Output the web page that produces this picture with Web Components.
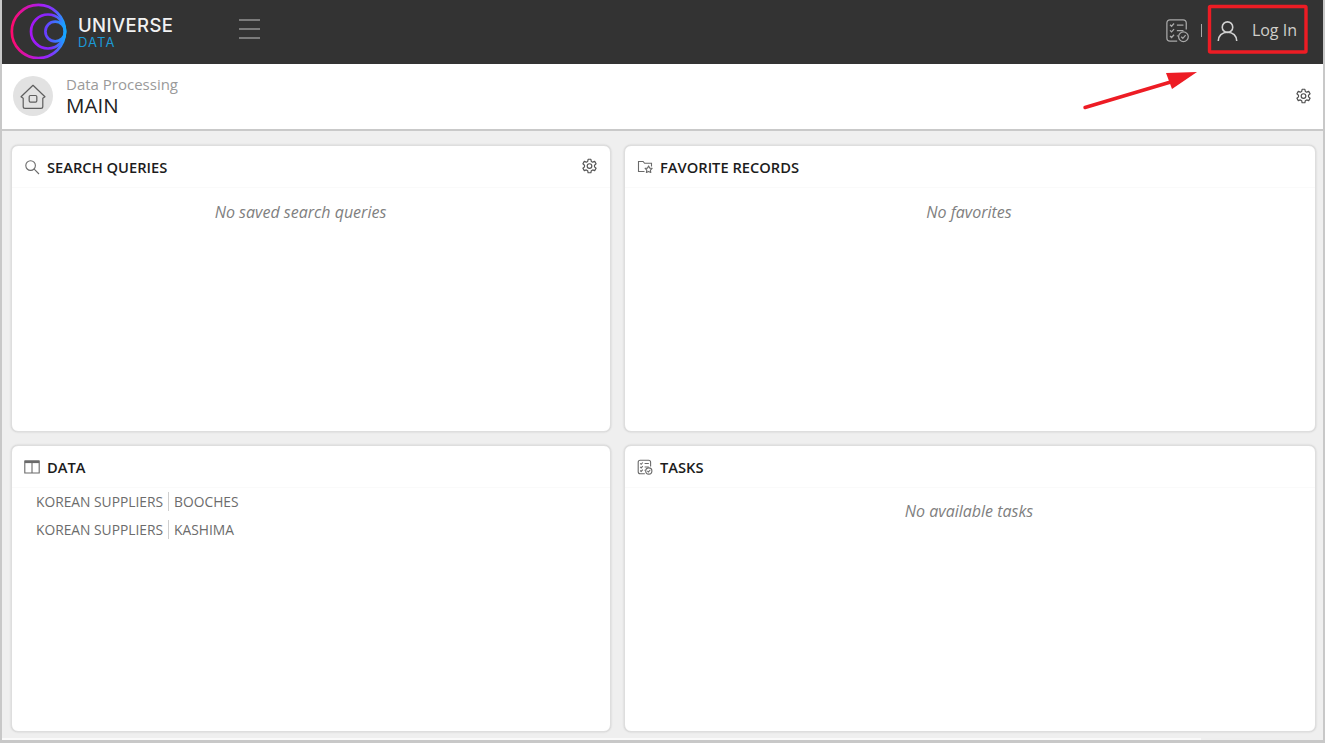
<!DOCTYPE html>
<html lang="en">
<head>
<meta charset="utf-8">
<title>Universe Data</title>
<style>
  html, body { margin: 0; height: 100%; overflow: hidden; }
  body { font-family: "Open Sans", "Liberation Sans", sans-serif; background: #efefef; }
</style>
</head>
<body>
<ud-app>
  <ud-topbar slot="top"></ud-topbar>
  <ud-crumbs slot="crumbs" section="Data Processing" page="MAIN"></ud-crumbs>
  <ud-panel icon="search" heading="SEARCH QUERIES" gear>
    <ud-empty style="padding-top: 14px; padding-right: 21px">No saved search queries</ud-empty>
  </ud-panel>
  <ud-panel icon="folder-star" heading="FAVORITE RECORDS">
    <ud-empty style="padding-top: 14px; padding-right: 2px">No favorites</ud-empty>
  </ud-panel>
  <ud-panel icon="table" heading="DATA">
    <ud-data-link group="KOREAN SUPPLIERS" name="BOOCHES"></ud-data-link>
    <ud-data-link group="KOREAN SUPPLIERS" name="KASHIMA"></ud-data-link>
  </ud-panel>
  <ud-panel icon="tasks" heading="TASKS">
    <ud-empty style="padding-top: 13px; padding-right: 2px">No available tasks</ud-empty>
  </ud-panel>
</ud-app>
<ud-callout></ud-callout>

<script>
// all icons live here, the stroke colour comes from currentColor
const ICONS = {
  search: '<circle cx="6.6" cy="6.6" r="4.8"/><path d="M10.2 10.2l4.8 4.8"/>',
  gear: '<path d="M6.7 1.2h2.6l.4 2 1.3.7 1.9-.7 1.3 2.3-1.5 1.3v1.5l1.5 1.3-1.3 2.3-1.9-.7-1.3.7-.4 2H6.7l-.4-2-1.3-.7-1.9.7-1.3-2.3 1.5-1.3V6.8L1.8 5.5 3.1 3.2l1.9.7 1.3-.7z" stroke-linejoin="round"/><circle cx="8" cy="7.6" r="2.2"/>',
  'folder-star': '<path d="M7.5 12.5H1.5V2.5h4.6l1.5 1.8h6.9v3.2"/><path d="M11.6 6.9l1.1 2.2 2.4.3-1.7 1.7.4 2.4-2.2-1.1-2.2 1.1.4-2.4-1.7-1.7 2.4-.3z" stroke-linejoin="round"/>',
  table: '<path d="M.8 2h14.4v12H.8z"/><path d="M.8 2.8h14.4" stroke-width="2.6"/><path d="M8 3v11"/>',
  tasks: '<path d="M13.6 7.4V3.2c0-1.2-.8-2-2-2H3.2c-1.2 0-2 .8-2 2v9.6c0 1.2.8 2 2 2h4.6"/><path d="M3.2 4.3l1 1 1.6-1.8M3.2 7.9l1 1 1.6-1.8M3.2 11.5l1 1 1.6-1.8M7.6 4.5h4.2M7.6 8h4.2M7.6 11.4h.6"/><circle cx="11.8" cy="12" r="3.1"/><path d="M10.4 12l1 1 1.8-2"/>',
  user: '<circle cx="10" cy="6.8" r="5"/><path d="M1.2 20c0-5 3.6-8.4 8.8-8.4s8.8 3.4 8.8 8.4"/>',
  home: '<path d="M1.6 11.6L11 2.6l9.4 9-1.7 1.2v6.4c0 1-.6 1.5-1.5 1.5H4.8c-.9 0-1.5-.5-1.5-1.5v-6.4z" stroke-linejoin="round"/><rect x="8" y="10.6" width="6" height="5.2" rx="1"/>'
}

class UdIcon extends HTMLElement {
  connectedCallback() {
    const size = this.getAttribute('size') || 16
    const box = this.getAttribute('box') || 16
    const stroke = this.getAttribute('stroke') || 1.1
    this.attachShadow({ mode: 'open' }).innerHTML = `
      <style>
        :host { display: inline-flex; flex: none; width: ${size}px; height: ${size}px; }
        svg { width: 100%; height: 100%; display: block; fill: none; stroke: currentColor; stroke-width: ${stroke}; }
      </style>
      <svg viewBox="0 0 ${box} ${box}">${ICONS[this.getAttribute('name')] || ''}</svg>`
  }
}

class UdApp extends HTMLElement {
  constructor() {
    super()
    this.attachShadow({ mode: 'open' }).innerHTML = `
      <style>
        :host {
          display: flex; flex-direction: column; box-sizing: border-box;
          height: 743px;
          border-left: 2px solid #c8c8c8; border-right: 2px solid #c8c8c8;
          border-bottom: 3px solid #c8c8c8;
          background: #efefef;
        }
        .grid {
          flex: 1; min-height: 0;
          display: grid;
          grid-template-columns: 600px 692px;
          grid-template-rows: 287px 287px;
          gap: 13px;
          padding: 14px 8px 0 9px;
        }
        .foot { flex: none; width: 1199px; height: 2px; background: #fafafa; }
      </style>
      <slot name="top"></slot>
      <slot name="crumbs"></slot>
      <div class="grid"><slot></slot></div>
      <div class="foot"></div>`
  }
}

class UdTopbar extends HTMLElement {
  constructor() {
    super()
    this.attachShadow({ mode: 'open' }).innerHTML = `
      <style>
        :host {
          display: flex; align-items: center; flex: none; box-sizing: border-box;
          height: 64px; padding-bottom: 5px; background: #333333; color: #c4c4c4;
        }
        .logo { display: block; margin-left: 8px; width: 58px; height: 58px; flex: none; }
        .brand { margin: 6px 0 0 10px; width: 97px; flex: none; font-family: Inter, "Open Sans", sans-serif; line-height: 1; }
        .brand b { display: block; font-weight: 500; font-size: 18.5px; letter-spacing: 0.4px; color: #f2f2f2; }
        .brand span { display: block; margin-top: 2px; font-size: 13px; letter-spacing: 1.1px; color: #1b9ad6; }
        .burger { margin: -2px 0 0 64px; width: 21px; display: flex; flex-direction: column; gap: 7px; }
        .burger i { display: block; height: 2px; background: #7b7b7b; }
        .right { margin-left: auto; display: flex; align-items: center; }
        .sep { margin: 1px 0 0 11px; width: 1px; height: 13px; background: #a8a8a8; }
        .user { margin: 1px 14px 0 15px; color: #d2d2d2; }
        .login { margin: 1px 26px 0 0; font-size: 16px; color: #d0cfcb; }
        .tasks { color: #a9a9a9; margin-top: 1px; }
      </style>
      <svg class="logo" viewBox="0 0 58 58">
        <defs>
          <linearGradient id="g1" x1="0" x2="1" y1="0" y2="0">
            <stop offset="0" stop-color="#ff0a6c"/><stop offset=".55" stop-color="#a81cf6"/>
            <stop offset=".78" stop-color="#7a3cff"/><stop offset="1" stop-color="#16a6ff"/>
          </linearGradient>
          <linearGradient id="g2" x1="0" x2="1" y1="0" y2="0">
            <stop offset="0" stop-color="#a516f4"/><stop offset=".6" stop-color="#7c2cff"/><stop offset="1" stop-color="#16a6ff"/>
          </linearGradient>
          <linearGradient id="g3" x1="0" x2="1" y1="0" y2="0">
            <stop offset="0" stop-color="#6a3cff"/><stop offset="1" stop-color="#16a6ff"/>
          </linearGradient>
        </defs>
        <g fill="none" stroke-width="2.7">
          <circle cx="28.4" cy="30.5" r="26.6" stroke="url(#g1)"/>
          <circle cx="38" cy="30.5" r="17" stroke="url(#g2)"/>
          <circle cx="45.2" cy="30.5" r="9.8" stroke="url(#g3)"/>
        </g>
      </svg>
      <div class="brand"><b>UNIVERSE</b><span>DATA</span></div>
      <div class="burger"><i></i><i></i><i></i></div>
      <div class="right">
        <ud-icon class="tasks" name="tasks" size="25" stroke="0.8"></ud-icon>
        <div class="sep"></div>
        <ud-icon class="user" name="user" size="21" box="20" stroke="1.5"></ud-icon>
        <span class="login">Log In</span>
      </div>`
  }
}

class UdCrumbs extends HTMLElement {
  connectedCallback() {
    this.attachShadow({ mode: 'open' }).innerHTML = `
      <style>
        :host {
          display: flex; align-items: center; flex: none; box-sizing: border-box;
          height: 67px; background: #fff; border-bottom: 2px solid #c9c9c9;
          padding: 0 11px 1px 11px;
        }
        .badge {
          width: 40px; height: 40px; border-radius: 50%; background: #e2e2e2; color: #5e5e5e;
          display: flex; align-items: center; justify-content: center; flex: none;
        }
        .txt { margin: -2px 0 0 13px; flex: 1; }
        .section { font-size: 15px; line-height: 20px; color: #9a9a9a; }
        .page { font-size: 20.5px; line-height: 22px; color: #222; }
        .gear { color: #4f4f4f; }
      </style>
      <div class="badge"><ud-icon name="home" size="28" box="22" stroke="0.95"></ud-icon></div>
      <div class="txt">
        <div class="section">${this.getAttribute('section')}</div>
        <div class="page">${this.getAttribute('page')}</div>
      </div>
      <ud-icon class="gear" name="gear" size="17"></ud-icon>`
  }
}

class UdPanel extends HTMLElement {
  connectedCallback() {
    const gear = this.hasAttribute('gear')
      ? '<ud-icon class="gear" name="gear" size="17"></ud-icon>' : ''
    this.attachShadow({ mode: 'open' }).innerHTML = `
      <style>
        :host {
          display: flex; flex-direction: column; box-sizing: border-box; min-width: 0;
          background: #fff; border-radius: 7px;
          border: 1px solid #dedede; box-shadow: 0 0 2px #c4c4c4;
        }
        .head {
          display: flex; align-items: center; flex: none; box-sizing: border-box;
          height: 42px; padding: 0 12px 0 12px; border-bottom: 1px solid #fafafa;
        }
        .head ud-icon.ico { color: #6a6a6a; margin-right: 7px; }
        .title { flex: 1; font-size: 14.7px; font-weight: 600; color: #1c1c1c; }
        .gear { color: #555; }
        .body { flex: 1; min-height: 0; }
      </style>
      <div class="head">
        <ud-icon class="ico" name="${this.getAttribute('icon')}" size="16"></ud-icon>
        <div class="title">${this.getAttribute('heading')}</div>
        ${gear}
      </div>
      <div class="body"><slot></slot></div>`
  }
}

class UdEmpty extends HTMLElement {
  constructor() {
    super()
    this.attachShadow({ mode: 'open' }).innerHTML = `
      <style>
        :host {
          display: block; text-align: center; padding-top: 14px;
          font-size: 16px; line-height: 20px; font-style: italic; color: #808080;
        }
      </style>
      <slot></slot>`
  }
}

class UdDataLink extends HTMLElement {
  connectedCallback() {
    this.attachShadow({ mode: 'open' }).innerHTML = `
      <style>
        :host {
          display: flex; align-items: center; box-sizing: border-box; height: 28px;
          padding: 0 0 2px 24px; font-size: 13.8px; color: #6c6c6c;
        }
        i { display: block; width: 1px; height: 19px; background: #cfcfcf; margin: 0 5px; }
      </style>
      <span>${this.getAttribute('group')}</span><i></i><span>${this.getAttribute('name')}</span>`
  }
}

// the red annotation drawn on top of the screenshot
class UdCallout extends HTMLElement {
  constructor() {
    super()
    this.attachShadow({ mode: 'open' }).innerHTML = `
      <style>
        :host { position: absolute; left: 0; top: 0; width: 1325px; height: 743px; pointer-events: none; }
        svg { display: block; }
      </style>
      <svg width="1325" height="743" viewBox="0 0 1325 743">
        <rect x="1209.5" y="6.5" width="96.5" height="45.5" rx="1" fill="none" stroke="#ed1c24" stroke-width="3.4"/>
        <path d="M1085 107.5L1174 81" stroke="#ed1c24" stroke-width="3.4" stroke-linecap="round" fill="none"/>
        <path d="M1197 72L1166 73L1172 89Z" fill="#ed1c24"/>
      </svg>`
  }
}

customElements.define('ud-icon', UdIcon)
customElements.define('ud-app', UdApp)
customElements.define('ud-topbar', UdTopbar)
customElements.define('ud-crumbs', UdCrumbs)
customElements.define('ud-panel', UdPanel)
customElements.define('ud-empty', UdEmpty)
customElements.define('ud-data-link', UdDataLink)
customElements.define('ud-callout', UdCallout)
</script>
</body>
</html>
